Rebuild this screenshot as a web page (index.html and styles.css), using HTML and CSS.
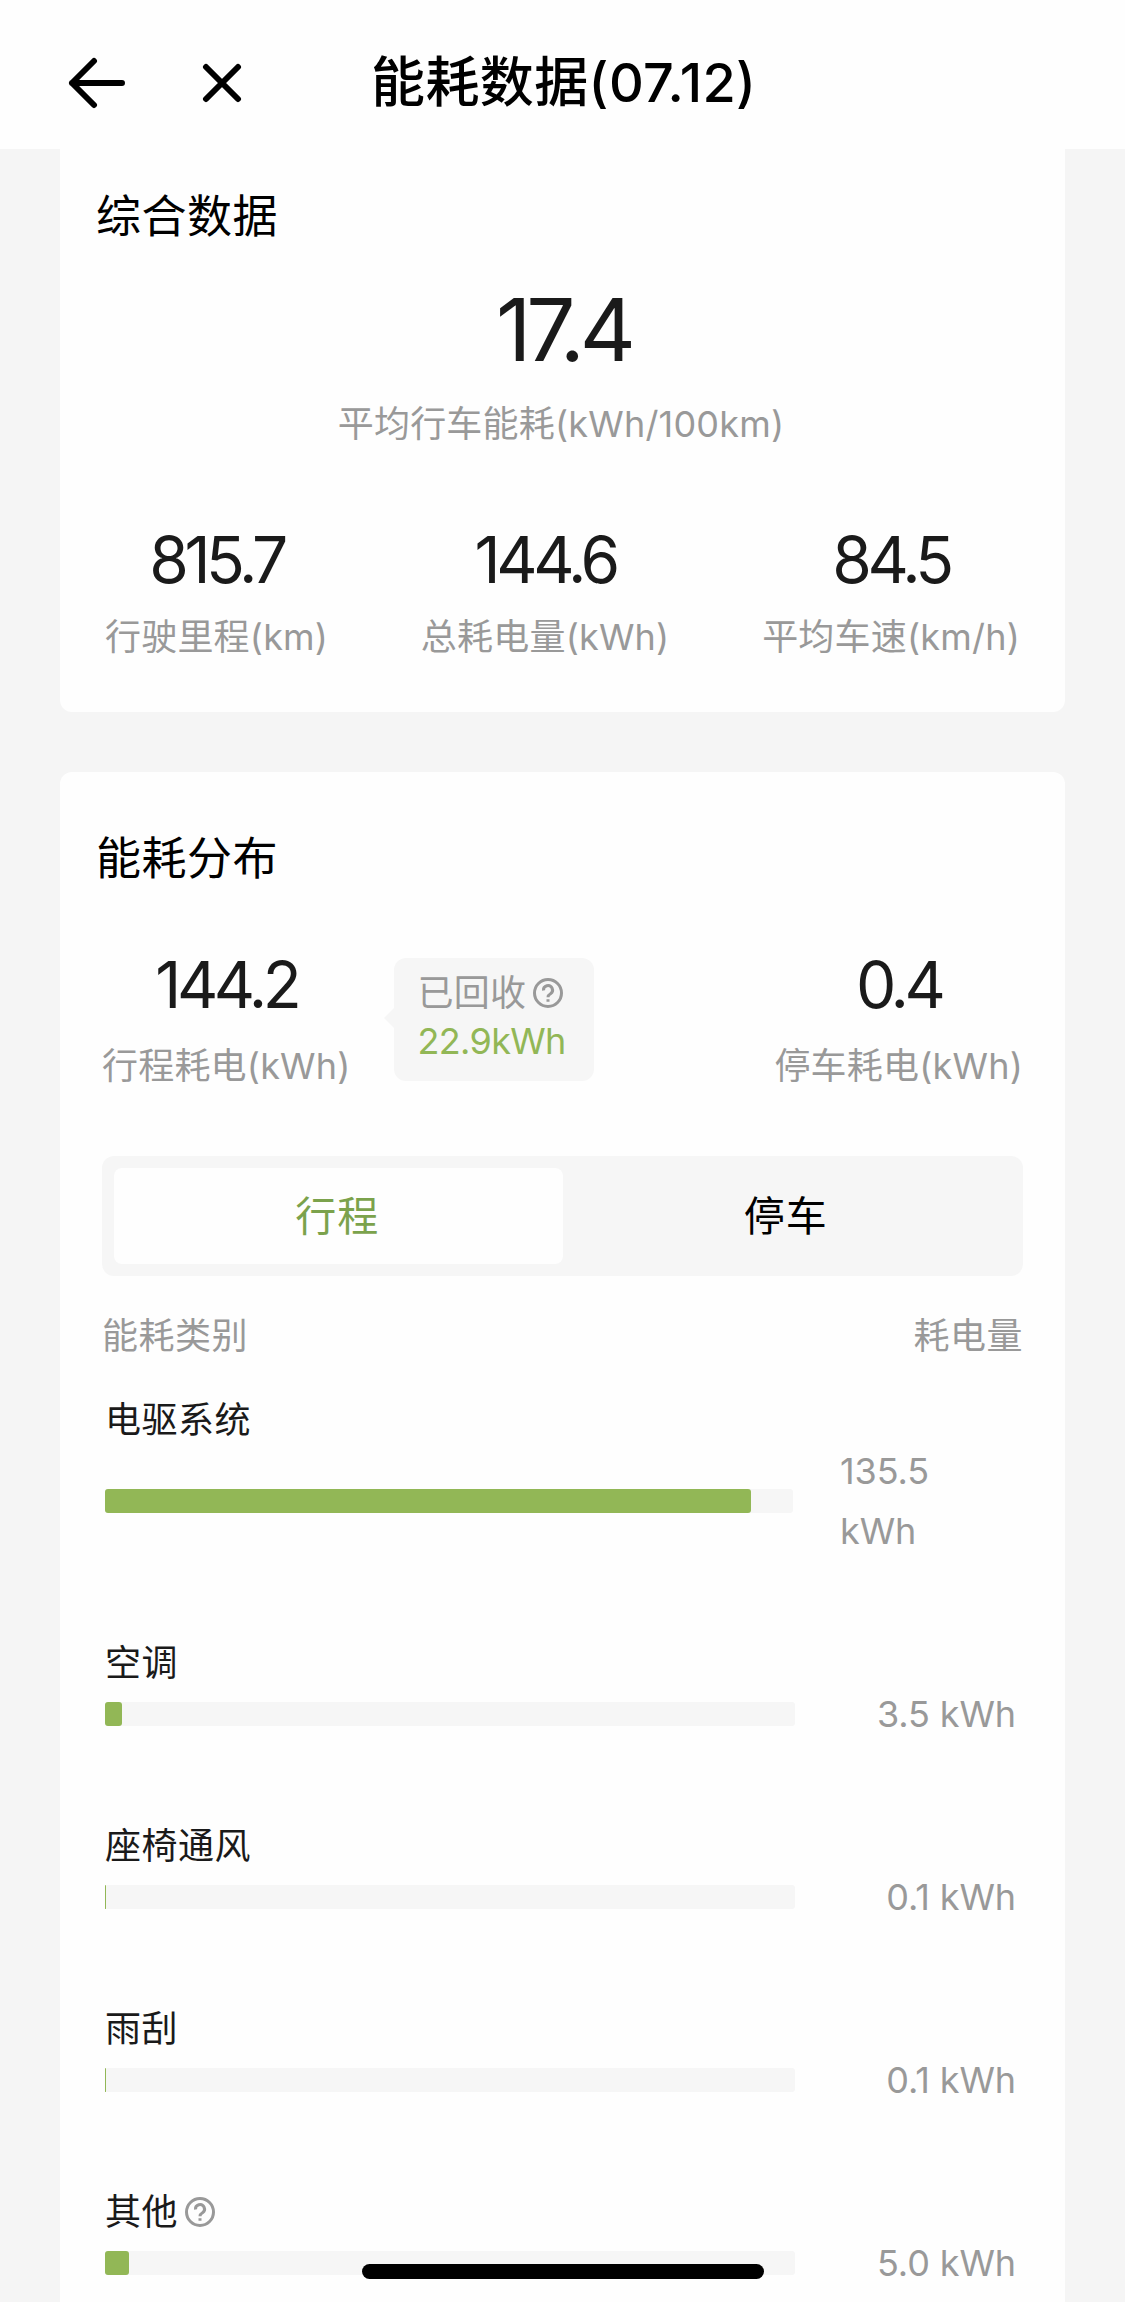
FILE: index.html
```html
<!DOCTYPE html>
<html lang="zh-CN">

<head>
    <meta charset="utf-8">
    <meta name="viewport" content="width=device-width, initial-scale=1.0">
    <title>能耗数据</title>
    <link rel="stylesheet" href="styles.css">
</head>

<body>

    <header class="topbar">
        <svg class="back" viewBox="0 0 58 52" aria-label="返回">
            <path d="M27 4 L5 26 L27 48 M5 26 H55" />
        </svg>
        <svg class="close" viewBox="0 0 40 40" aria-label="关闭">
            <path d="M4 4 L36 36 M36 4 L4 36" />
        </svg>
        <h1>能耗数据(07.12)</h1>
    </header>

    <section class="card summary">
        <h2>综合数据</h2>
        <div class="average">
            <p class="number big">17.4</p>
            <p class="label">平均行车能耗(kWh/100km)</p>
        </div>
        <div class="totals">
            <div class="total">
                <p class="number">815.7</p>
                <p class="label">行驶里程(km)</p>
            </div>
            <div class="total">
                <p class="number">144.6</p>
                <p class="label">总耗电量(kWh)</p>
            </div>
            <div class="total">
                <p class="number">84.5</p>
                <p class="label">平均车速(km/h)</p>
            </div>
        </div>
    </section>

    <section class="card usage">
        <h2>能耗分布</h2>
        <div class="split">
            <div class="part">
                <p class="number">144.2</p>
                <p class="label">行程耗电(kWh)</p>
            </div>
            <div class="bubble">
                <p class="label">已回收<svg class="help" viewBox="0 0 30 30">
                        <circle cx="15" cy="15" r="13.5" />
                        <path d="M10.5 12.5 A4.5 4.5 0 1 1 17.5 15.8 Q15 17.3 15 19.2 M15 21.2 V23.8" />
                    </svg></p>
                <p class="recovered">22.9kWh</p>
            </div>
            <div class="part">
                <p class="number">0.4</p>
                <p class="label">停车耗电(kWh)</p>
            </div>
        </div>

        <nav class="tabs">
            <button class="tab valgt">行程</button>
            <button class="tab">停车</button>
        </nav>

        <div class="listhead">
            <span>能耗类别</span>
            <span>耗电量</span>
        </div>

        <article class="item wrap">
            <h3>电驱系统</h3>
            <div class="line">
                <div class="bar"><div class="fill" style="width: 93.9%"></div></div>
                <p class="value">135.5 kWh</p>
            </div>
        </article>
        <article class="item">
            <h3>空调</h3>
            <div class="line">
                <div class="bar"><div class="fill" style="width: 2.5%"></div></div>
                <p class="value">3.5 kWh</p>
            </div>
        </article>
        <article class="item">
            <h3>座椅通风</h3>
            <div class="line">
                <div class="bar"><div class="fill" style="width: 0.15%"></div></div>
                <p class="value">0.1 kWh</p>
            </div>
        </article>
        <article class="item">
            <h3>雨刮</h3>
            <div class="line">
                <div class="bar"><div class="fill" style="width: 0.15%"></div></div>
                <p class="value">0.1 kWh</p>
            </div>
        </article>
        <article class="item">
            <h3>其他<svg class="help" viewBox="0 0 30 30">
                    <circle cx="15" cy="15" r="13.5" />
                    <path d="M10.5 12.5 A4.5 4.5 0 1 1 17.5 15.8 Q15 17.3 15 19.2 M15 21.2 V23.8" />
                </svg></h3>
            <div class="line">
                <div class="bar"><div class="fill" style="width: 3.5%"></div></div>
                <p class="value">5.0 kWh</p>
            </div>
        </article>
    </section>

    <div class="homebar"></div>

</body>

</html>
```

FILE: styles.css
```css
* {
    box-sizing: border-box;
    margin: 0;
    padding: 0;
}

html,
body {
    height: 2302px;
    overflow: hidden;
}

body {
    background: #f5f5f5;
    font-family: Inter, "Noto Sans CJK SC", sans-serif;
    color: #000;
}

.topbar {
    height: 149px;
    padding: 16px 0 0 67px;
    background: #fefefe;
    display: flex;
    align-items: center;
}

.topbar svg {
    fill: none;
    stroke: #000;
    stroke-width: 6;
    stroke-linecap: round;
    stroke-linejoin: round;
}

.back {
    width: 58px;
    height: 52px;
}

.close {
    width: 40px;
    height: 40px;
    margin-left: 77px;
}

h1 {
    margin-left: 129px;
    padding-top: 1px;
    font-size: 54px;
    line-height: 60px;
    font-weight: 500;
    letter-spacing: 0.4px;
    white-space: nowrap;
}

.card {
    width: 1005px;
    margin: 0 auto;
    background: #fefefe;
    border-radius: 12px;
}

h2 {
    font-size: 45px;
    line-height: 60px;
    font-weight: 400;
    letter-spacing: 0.5px;
}

.number {
    font-size: 64px;
    line-height: 70px;
    letter-spacing: -4.4px;
    color: #1a1a1a;
}

.label {
    font-size: 36px;
    line-height: 48px;
    letter-spacing: 0.2px;
    color: #999;
    white-space: nowrap;
}

.summary {
    height: 563px;
    padding: 38px 42px 0 36px;
    border-radius: 0 0 12px 12px;
}

.average {
    margin-top: 43px;
    padding-left: 3px;
    text-align: center;
}

.big {
    padding-left: 5px;
    font-size: 87px;
    line-height: 80px;
    letter-spacing: -5px;
}

.average .label {
    margin-top: 30px;
}

.totals {
    display: flex;
    justify-content: space-between;
    margin-top: 77px;
    padding: 0 3px 0 9px;
}

.total,
.part {
    text-align: center;
}

.total .label {
    margin-top: 18px;
}

.usage {
    height: 1542px;
    margin-top: 60px;
    padding: 57px 42px 0;
    border-radius: 12px 12px 0 0;
}

.usage h2 {
    margin-left: -6px;
}

.split {
    display: flex;
    margin-top: 61px;
}

.part .label {
    margin-top: 22px;
}

.part:last-child {
    margin-left: auto;
}

.bubble {
    position: relative;
    width: 200px;
    height: 123px;
    margin: 8px 0 0 43px;
    padding: 11px 0 0 24px;
    border-radius: 12px;
    background: #f6f6f6;
}

.bubble::before {
    content: "";
    position: absolute;
    left: -10px;
    top: 50px;
    border: 10px solid transparent;
    border-left: 0;
    border-right-color: #f6f6f6;
}

.help {
    width: 30px;
    height: 30px;
    margin-left: 7px;
    vertical-align: -2px;
    fill: none;
    stroke: #999;
    stroke-width: 3;
}

.recovered {
    font-size: 36px;
    line-height: 48px;
    letter-spacing: -0.7px;
    color: #92b756;
}

.tabs {
    display: flex;
    height: 120px;
    margin-top: 66px;
    padding: 12px;
    border-radius: 12px;
    background: #f6f6f6;
}

.tab {
    flex: 1;
    padding-right: 2px;
    border: 0;
    border-radius: 8px;
    background: none;
    font: 41px/60px Inter, "Noto Sans CJK SC", sans-serif;
    letter-spacing: 1px;
    color: #000;
}

.valgt {
    background: #fefefe;
    color: #7ba24c;
}

.listhead {
    display: flex;
    justify-content: space-between;
    margin-top: 36px;
    font-size: 36px;
    line-height: 48px;
    letter-spacing: 0.5px;
    color: #999;
}

.item {
    height: 183px;
    padding: 0 7px 0 3px;
}

.wrap {
    height: 243px;
    margin-top: 36px;
}

h3 {
    font-size: 36px;
    line-height: 48px;
    font-weight: 400;
    letter-spacing: 0.5px;
    color: #1a1a1a;
}

.line {
    display: flex;
    justify-content: space-between;
    align-items: center;
    height: 60px;
    margin-top: -3px;
}

.wrap .line {
    height: 120px;
    margin-top: -3px;
}

.bar {
    width: 690px;
    height: 24px;
    border-radius: 3px;
    background: #f6f6f6;
}

.wrap .bar {
    width: 688px;
}

.fill {
    height: 24px;
    border-radius: 3px;
    background: #92b756;
}

.value {
    font-size: 36px;
    line-height: 60px;
    letter-spacing: -0.1px;
    color: #999;
}

.wrap .value {
    width: 176px;
    padding-right: 40px;
}

/* iOS home indicator */
.homebar {
    position: fixed;
    left: 362px;
    top: 2264px;
    width: 402px;
    height: 15px;
    border-radius: 8px;
    background: #000;
}
```
